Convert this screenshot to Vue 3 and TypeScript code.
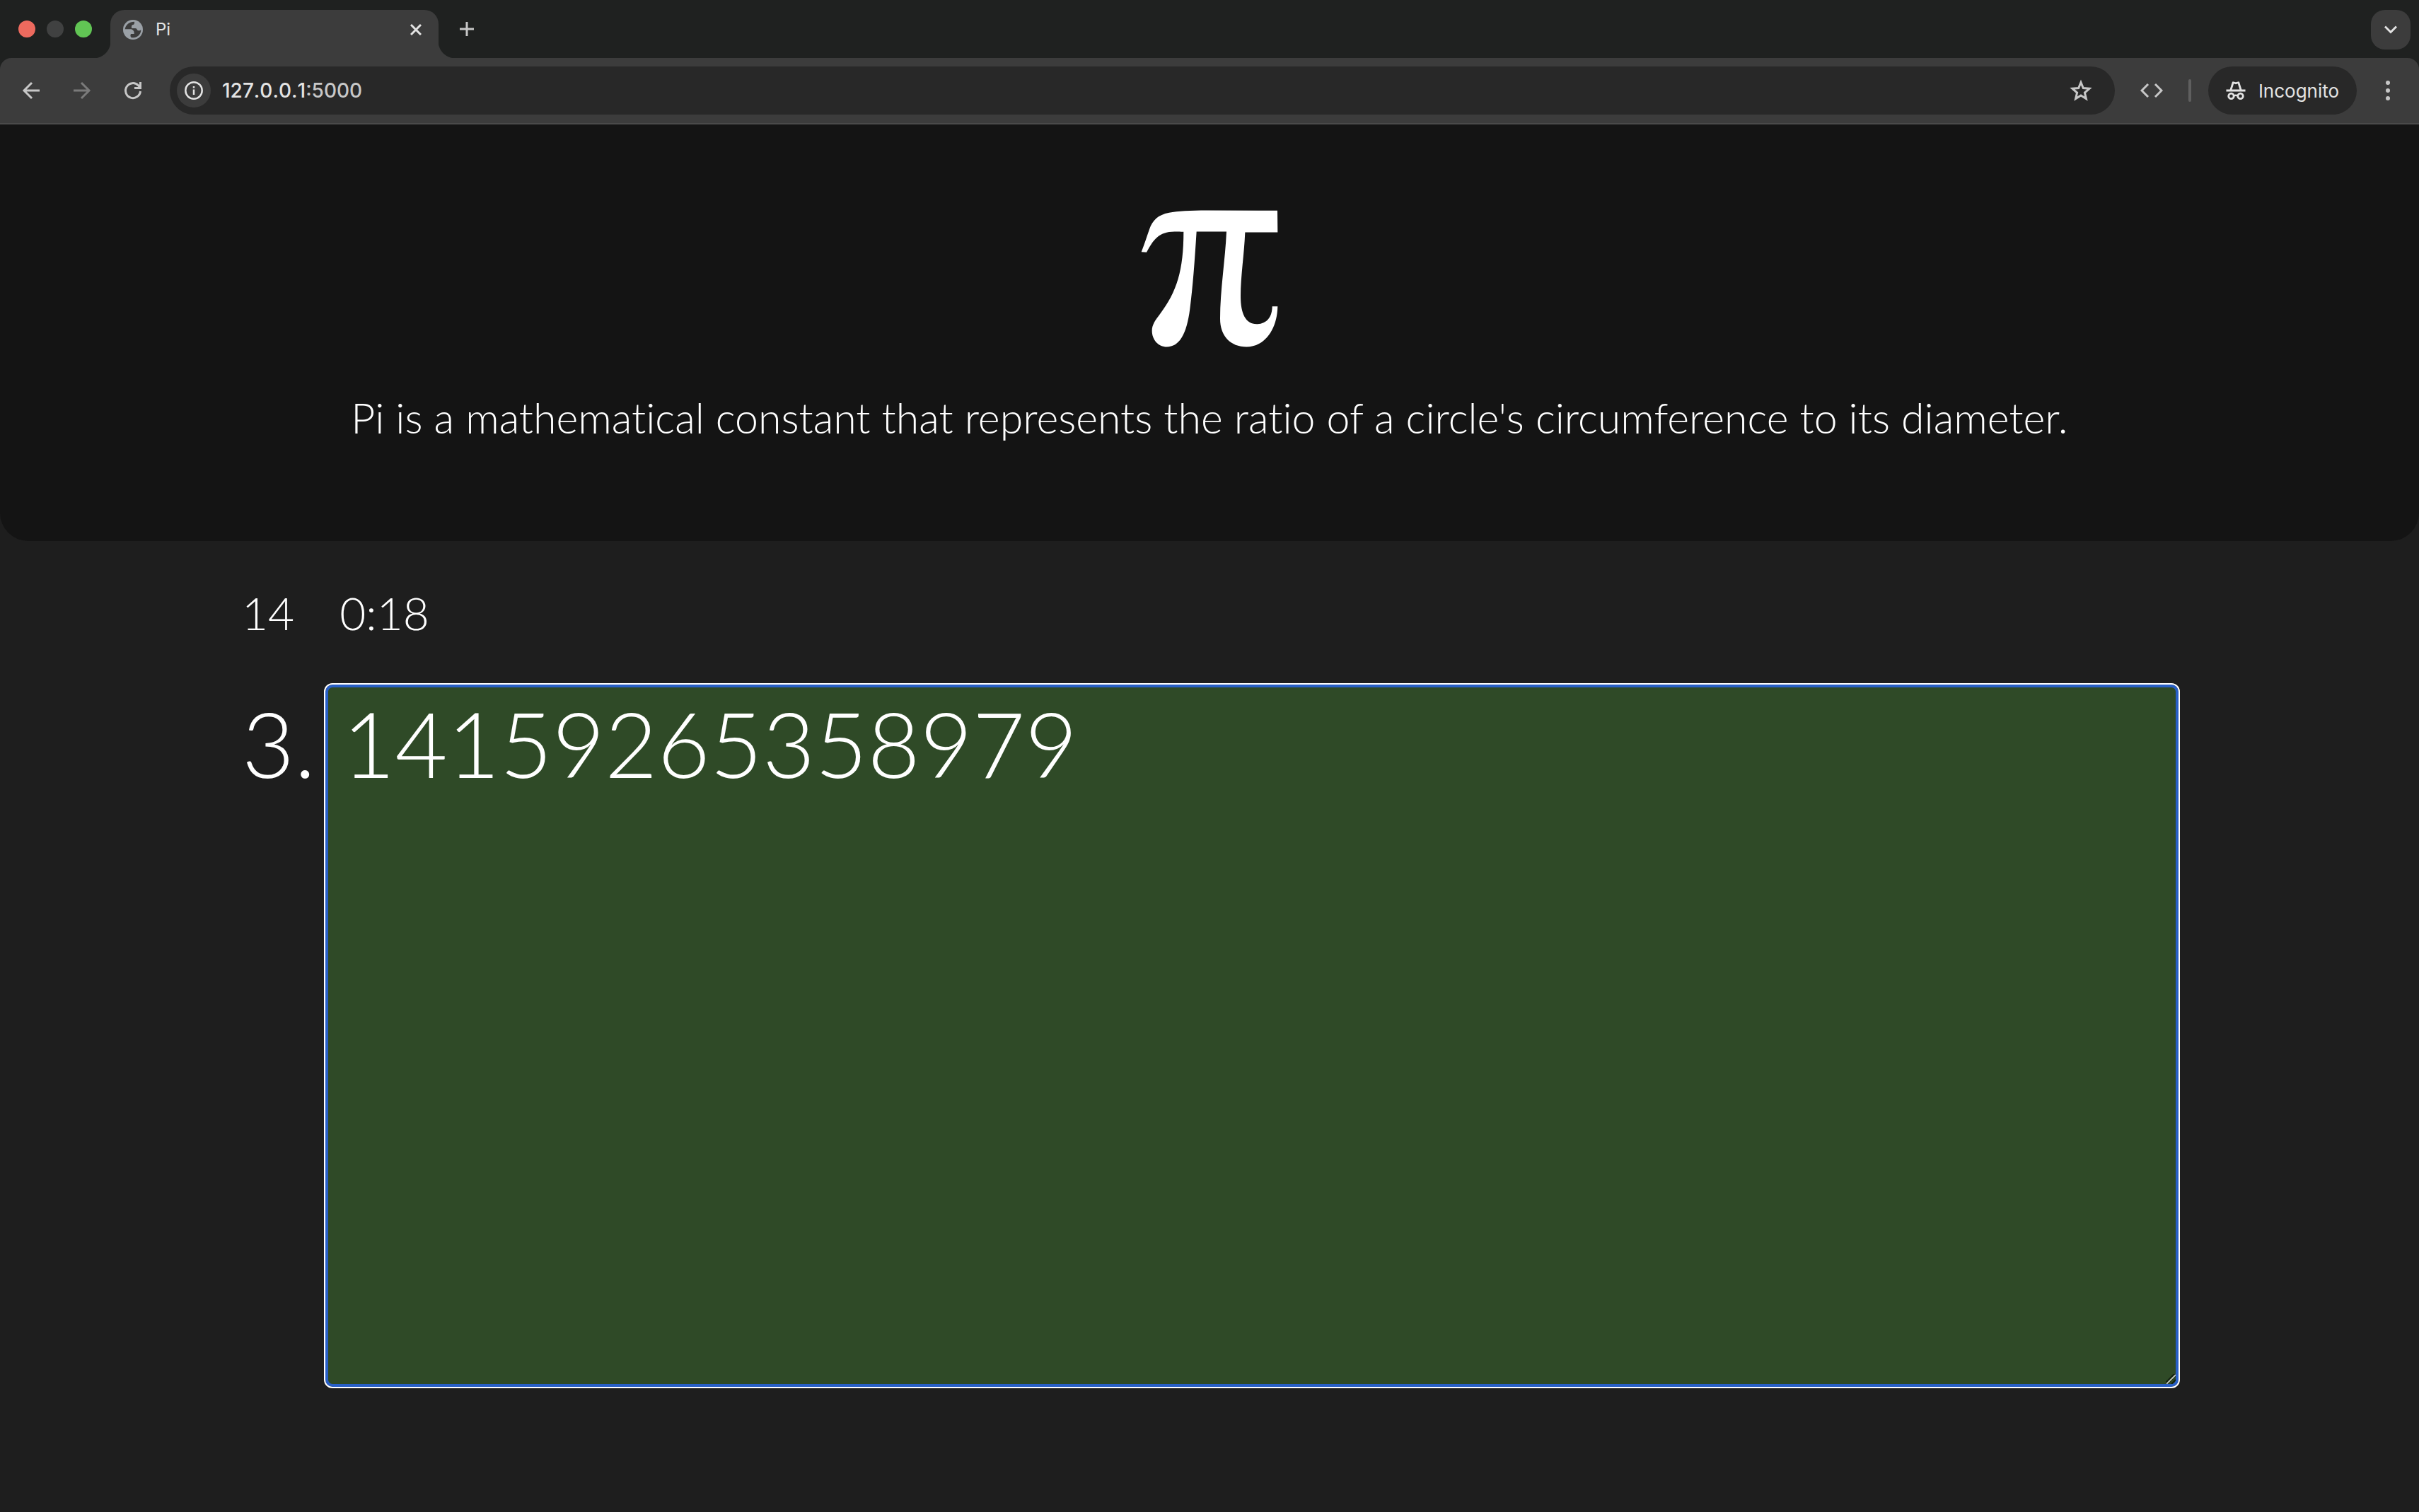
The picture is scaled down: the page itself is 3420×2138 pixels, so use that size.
<script setup lang="ts">
import { ref } from 'vue'

const digits = ref('14159265358979')
const address = ref('127.0.0.1:5000')
</script>

<template>
  <div class="window">
    <header class="browser">
      <div class="tab-strip">
        <div class="lights">
          <button class="light red" aria-label="Close window"></button>
          <button class="light grey" aria-label="Minimize window"></button>
          <button class="light green" aria-label="Zoom window"></button>
        </div>
        <div class="tab">
          <svg class="globe" viewBox="0 0 84 84" aria-hidden="true">
            <circle cx="42" cy="42" r="42" fill="#9aa0a6" />
            <path
              d="M48 8C26 8 10 22 8 40H30C40 40 47 46 47 56V60H33C30 66 31 72 36 76H44C62 74 76 62 76 42C72 47 62 47 59 41C58 37 54 36 46 36H36V28C36 23 40 20 45 20C48 18 49 12 48 8Z"
              fill="#3c3c3c"
            />
          </svg>
          <span class="tab-title">Pi</span>
          <button class="tab-close" aria-label="Close tab">
            <svg viewBox="0 0 16 16"><path d="M1 1 15 15 M15 1 1 15" /></svg>
          </button>
        </div>
        <button class="new-tab" aria-label="New tab">
          <svg viewBox="0 0 20 20"><path d="M10 0V20 M0 10H20" /></svg>
        </button>
        <button class="tab-search" aria-label="Search tabs">
          <svg viewBox="0 0 18 12"><path d="M1 1.500 9 9.500 17 1.500" /></svg>
        </button>
      </div>

      <div class="toolbar">
        <button class="nav" aria-label="Back">
          <svg viewBox="0 0 24 24"><path d="M24 12H2 M13 1 2 12 13 23" /></svg>
        </button>
        <button class="nav off" aria-label="Forward" disabled>
          <svg viewBox="0 0 24 24"><path d="M0 12H22 M11 1 22 12 11 23" /></svg>
        </button>
        <button class="nav" aria-label="Reload">
          <svg viewBox="0 0 24 24">
            <path d="M22.500 13A10.500 10.500 0 1 1 19.500 4.700L22.500 8 M22.500 0V8.500H14" />
          </svg>
        </button>
        <div class="omnibox">
          <button class="site-info" aria-label="Site information">
            <svg viewBox="0 0 26 26">
              <circle cx="13" cy="13" r="11.700" />
              <path d="M13 11.500V19 M13 7V9.500" />
            </svg>
          </button>
          <label class="address">
            <span class="url" aria-hidden="true"><b>127.0.0.1</b>:5000</span>
            <input v-model="address" aria-label="Address" />
          </label>
          <button class="star" aria-label="Bookmark this tab">
            <svg viewBox="0 0 32 32">
              <path d="M16 4.500 19.300 12.600 28 13.300 21.400 19 23.400 27.500 16 23 8.600 27.500 10.600 19 4 13.300 12.700 12.600Z" />
            </svg>
          </button>
        </div>
        <button class="code" aria-label="Developer tools">
          <svg viewBox="0 0 32 20"><path d="M11 1 2 10 11 19 M21 1 30 10 21 19" /></svg>
        </button>
        <span class="divider"></span>
        <button class="incognito">
          <svg viewBox="0 0 30 28" aria-hidden="true">
            <path
              d="M0.500 12.500H29.500V15.500H0.500Z M6 12.500 9.500 1.500Q10 0 11.500 0.500L15 1.500 18.500 0.500Q20 0 20.500 1.500L24 12.500H20.800L18 3.500 15 4.500 12 3.500 9.200 12.500Z"
              fill="#e3e3e3"
            />
            <circle cx="8" cy="22.500" r="4" />
            <circle cx="22" cy="22.500" r="4" />
            <path d="M12 22Q15 20.500 18 22" fill="none" stroke="#e3e3e3" stroke-width="2.500" />
          </svg>
          <span>Incognito</span>
        </button>
        <button class="menu" aria-label="Menu"><i></i><i></i><i></i></button>
      </div>
    </header>

    <main class="page">
      <section class="hero">
        <svg class="logo" viewBox="160 111 582 581" role="img" aria-label="Pi">
          <path
            d="M162 288C175 255 184 226 196 192C210 154 232 131 280 122C315 115 370 112 440 112L739 113L740 205H602C598 300 583 390 583 475C583 550 604 594 651 594C690 594 717 568 717 519H740C738 620 682 691 608 691C540 691 496 645 496 572C496 450 518 320 523 202H396C388 330 380 440 368 530C354 640 322 691 270 691C234 691 207 661 207 622C207 597 222 577 240 553C313 458 341 365 341 203C328 202 318 202 303 202C235 202 212 238 184 290Z"
          />
        </svg>
        <p class="tagline">
          Pi is a mathematical constant that represents the ratio of a circle's circumference to its diameter.
        </p>
      </section>

      <section class="practice">
        <div class="stats">
          <span>14</span>
          <span>0:18</span>
        </div>
        <div class="entry">
          <label class="prefix" for="digits">3.</label>
          <div class="field">
            <textarea id="digits" v-model="digits" spellcheck="false"></textarea>
            <svg class="grip" viewBox="0 0 14 14" aria-hidden="true">
              <path d="M0 14 14 0" stroke="#12200f" stroke-width="5" />
              <path d="M1 14 14 1" stroke="#b9c2b6" stroke-width="2" />
              <path d="M8 14 14 8" stroke="#12200f" stroke-width="2" />
            </svg>
          </div>
        </div>
      </section>
    </main>
  </div>
</template>

<style>
body {
  margin: 0;
  background: #1e1e1e;
}
</style>

<style scoped>
.window {
  min-height: 100vh;
  background: #1e1e1e;
  color: #fff;
  font-family: Lato, sans-serif;
  font-weight: 300;
}

button {
  display: flex;
  align-items: center;
  justify-content: center;
  flex: none;
  padding: 0;
  border: 0;
  background: none;
  color: inherit;
  font: inherit;
}

svg {
  display: block;
  fill: none;
}

.browser {
  background: #1f2120;
  color: #e3e3e3;
  font-family: Inter, sans-serif;
  font-weight: 400;
}

.tab-strip {
  display: flex;
  align-items: center;
  height: 82px;
}

.lights {
  display: flex;
  gap: 16px;
  width: 130px;
  padding-left: 26px;
}

.light {
  width: 24px;
  height: 24px;
  border-radius: 50%;
}

.red {
  background: #ed6a5e;
}

.grey {
  background: #404141;
}

.green {
  background: #61c554;
}

.tab {
  position: relative;
  display: flex;
  align-items: center;
  box-sizing: border-box;
  align-self: flex-end;
  width: 464px;
  height: 68px;
  padding: 0 24px 12px 18px;
  border-radius: 20px 20px 0 0;
  background: #3c3c3c;
}

.tab::before,
.tab::after {
  content: '';
  position: absolute;
  bottom: 0;
  width: 24px;
  height: 24px;
}

.tab::before {
  right: 100%;
  background: radial-gradient(circle at 0 0, #1f2120 24px, #3c3c3c 25px);
}

.tab::after {
  left: 100%;
  background: radial-gradient(circle at 100% 0, #1f2120 24px, #3c3c3c 25px);
}

.globe {
  width: 28px;
  height: 28px;
}

.tab-title {
  flex: 1;
  margin-left: 18px;
  font-size: 24px;
  line-height: 32px;
}

.tab-close svg {
  width: 16px;
  height: 16px;
  stroke: #e3e3e3;
  stroke-width: 3;
}

.new-tab {
  width: 80px;
}

.new-tab svg {
  width: 20px;
  height: 20px;
  stroke: #c7c7c7;
  stroke-width: 3;
}

.tab-search {
  width: 56px;
  height: 56px;
  margin: 2px 12px 0 auto;
  border-radius: 20px;
  background: #3c3c3c;
}

.tab-search svg {
  width: 18px;
  height: 12px;
  stroke: #e3e3e3;
  stroke-width: 3;
}

.toolbar {
  display: flex;
  align-items: center;
  height: 92px;
  border-bottom: 2px solid #4a4a4a;
  border-radius: 16px 16px 0 0;
  background: #3c3c3c;
}

.nav {
  width: 72px;
  height: 68px;
}

.nav:first-child {
  margin-left: 8px;
}

.nav svg {
  width: 24px;
  height: 24px;
  overflow: visible;
  stroke: #c7c7c7;
  stroke-width: 3;
}

.nav.off svg {
  stroke: #7a7a7a;
}

.omnibox {
  display: flex;
  align-items: center;
  flex: 1;
  height: 68px;
  margin-left: 16px;
  border-radius: 34px;
  background: #282828;
}

.site-info {
  width: 48px;
  height: 48px;
  margin-left: 10px;
  border-radius: 50%;
  background: #3c3c3c;
}

.site-info svg {
  width: 26px;
  height: 26px;
  stroke: #e3e3e3;
  stroke-width: 2.500;
}

.address {
  position: relative;
  flex: 1;
  margin-left: 16px;
  font-size: 28px;
  font-weight: 500;
  font-kerning: none;
  line-height: 36px;
}

.url {
  color: #c7c7c7;
}

.url b {
  color: #e3e3e3;
  font-weight: 500;
}

.address input {
  position: absolute;
  inset: 0;
  width: 100%;
  box-sizing: border-box;
  padding: 0;
  border: 0;
  outline: 0;
  background: none;
  color: transparent;
  font: inherit;
}

.star {
  width: 96px;
  height: 68px;
}

.star svg {
  width: 32px;
  height: 32px;
  stroke: #c7c7c7;
  stroke-width: 3;
}

.code {
  width: 104px;
  height: 68px;
}

.code svg {
  width: 32px;
  height: 20px;
  stroke: #c7c7c7;
  stroke-width: 3;
}

.divider {
  width: 4px;
  height: 32px;
  border-radius: 2px;
  background: #5f5f5f;
}

.incognito {
  gap: 18px;
  width: 210px;
  height: 68px;
  margin-left: 24px;
  border-radius: 34px;
  background: #282828;
  font-size: 26px;
}

.incognito svg {
  width: 28px;
  height: 28px;
}

.incognito circle {
  stroke: #e3e3e3;
  stroke-width: 3;
}

.menu {
  flex-direction: column;
  gap: 5px;
  width: 88px;
  height: 68px;
}

.menu i {
  width: 6px;
  height: 6px;
  border-radius: 50%;
  background: #c7c7c7;
}

.hero {
  display: flex;
  flex-direction: column;
  align-items: center;
  gap: 64px;
  padding: 121px 80px 138px;
  border-radius: 0 0 40px 40px;
  background: #141414;
  text-align: center;
}

.logo {
  width: 194px;
  height: 194px;
}

.logo path {
  fill: #fff;
}

.tagline {
  margin: 0;
  font-size: 59px;
  font-variant-ligatures: none;
  line-height: 72px;
}

.practice {
  width: 80%;
  margin: 0 auto;
  padding: 62px 0 176px;
}

.stats {
  display: flex;
  gap: 64px;
  font-size: 64px;
  line-height: 80px;
}

.entry {
  display: flex;
  gap: 16px;
  margin-top: 63px;
}

.prefix {
  padding-top: 4px;
  font-size: 128px;
  line-height: 154px;
}

.field {
  position: relative;
  flex: 1;
}

textarea {
  display: block;
  box-sizing: border-box;
  width: 100%;
  height: 989px;
  padding: 2px 20px;
  border: 2px solid #285fc6;
  border-radius: 8px;
  outline: 2px solid #fff;
  outline-offset: 2px;
  box-shadow: 0 0 0 2px #285fc6;
  background: #2f4a27;
  color: #fff;
  font: inherit;
  font-size: 128px;
  line-height: 154px;
  resize: none;
}

.grip {
  position: absolute;
  right: 2px;
  bottom: 2px;
  width: 14px;
  height: 14px;
}
</style>
